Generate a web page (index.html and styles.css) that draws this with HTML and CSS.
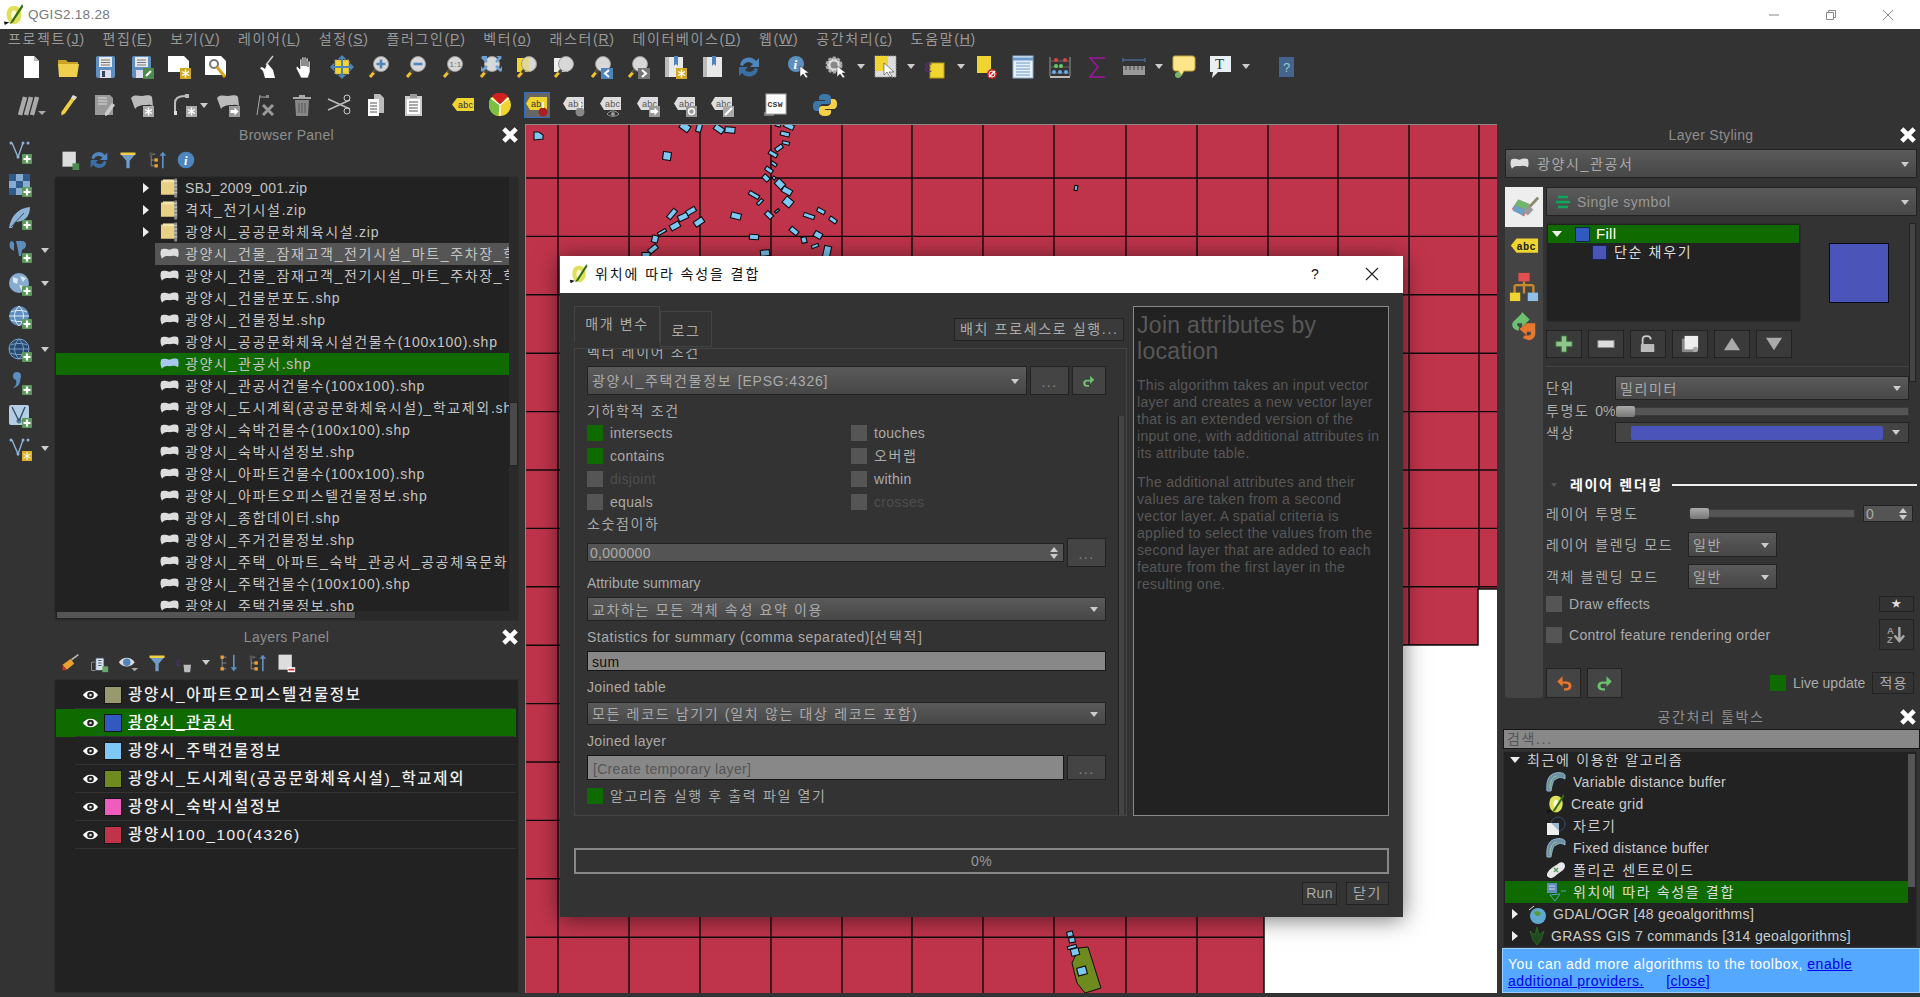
FILE: index.html
```html
<!DOCTYPE html>
<html lang="ko">
<head>
<meta charset="utf-8">
<title>QGIS2.18.28</title>
<link rel="stylesheet" href="styles.css">
</head>
<body>
<svg class="defs" xmlns="http://www.w3.org/2000/svg">
  <symbol id="qgis" viewBox="0 0 24 24"><path d="M12 2c6 0 8 5 8 10s-3 10-8 10-8-5-8-10 2-10 8-10z" fill="#dfe05a"/><path d="M12 7c2 0 3 2 3 5s-1 5-3 5-3-2-3-5 1-5 3-5z" fill="#fbfbd8"/><path d="M21 0 10 17l-3 5 4-2L22 3z" fill="#2f6d12"/><path d="M1 19l6 1-5 3z" fill="#111"/></symbol>
  <symbol id="poly" viewBox="0 0 20 15"><path d="M1 3C3 1 7 2 10 3 13 2 17 1 19 2.500 20 5 20 9 19 11 16 9 13 9 10 10 6 9 4 10 2 12.500 0 9 0 6 1 3Z" fill="currentColor"/></symbol>
  <symbol id="zip" viewBox="0 0 20 22"><path d="M1 3h14l3 3v12H1z" fill="#e8d084"/><path d="M3 2h12v3H3z" fill="#f3e5ad"/><path d="M15 1h3v20h-3z" fill="#8a8a8a"/><path d="M15 4h3M15 8h3M15 12h3M15 16h3" stroke="#ddd"/></symbol>
  <symbol id="eye" viewBox="0 0 18 12"><path d="M1 6c4-6 12-6 16 0-4 6-12 6-16 0z" fill="#fff"/><circle cx="9" cy="6" r="3.500" fill="#222"/><circle cx="9" cy="6" r="1.300" fill="#ddd"/></symbol>
  <symbol id="close" viewBox="0 0 16 16"><path d="M2.500 2.500l11 11M13.500 2.500l-11 11" stroke="#fff" stroke-width="4"/></symbol>
  <symbol id="mag" viewBox="0 0 24 24"><path d="M10 14 3 22" stroke="#f0c030" stroke-width="3"/><path d="M10 14 7 18" stroke="#444" stroke-width="3"/><circle cx="14" cy="9" r="7.500" fill="#d8d8d8" stroke="#9a9a9a"/></symbol>
  <symbol id="plus" viewBox="0 0 24 24"><rect x="14" y="14" width="10" height="10" rx="1" fill="#5c9a5c"/><path d="M19 15.500v7M15.500 19h7" stroke="#fff" stroke-width="2.200"/></symbol>
  <symbol id="vnode" viewBox="0 0 24 24"><path d="M4 3l6 14 5-14" fill="none" stroke="#8fb3d6" stroke-width="1.400"/><circle cx="3" cy="3" r="1.500" fill="#8fb3d6"/><circle cx="15" cy="3" r="1.500" fill="#8fb3d6"/><circle cx="20" cy="3" r="1.500" fill="#8fb3d6"/><circle cx="10" cy="17" r="1.500" fill="#8fb3d6"/></symbol>
  <symbol id="globe" viewBox="0 0 24 24"><circle cx="11" cy="11" r="10" fill="#5d8ec0"/><path d="M3 7c4-2 12-2 16 0M1 11h20M3 15c4 2 12 2 16 0M11 1c-6 6-6 14 0 20M11 1c6 6 6 14 0 20" stroke="#dfe9f3" fill="none"/></symbol>
  <symbol id="abc" viewBox="0 0 24 24"><path d="M5 4h17v13H5l-4-6.500z" fill="#ddd"/><text x="6" y="14" font-size="9" fill="#555" font-family="Liberation Sans">abc</text></symbol>
  <symbol id="blob" viewBox="0 0 24 24"><path d="M1 5c3-4 7-2 11-2s7-2 10 1l1 9c-3-2-6-1-9-1s-7 1-9 4z" fill="#bbb"/></symbol>
  <symbol id="starb" viewBox="0 0 24 24"><rect x="13" y="13" width="11" height="11" fill="#cfa81f"/><path d="M18.500 14.500v8M15 16.500l7 4M22 16.500l-7 4" stroke="#fff" stroke-width="1.400"/></symbol>
  <symbol id="starg" viewBox="0 0 24 24"><rect x="13" y="13" width="11" height="11" fill="#aaa"/><path d="M18.500 14.500v8M15 16.500l7 4M22 16.500l-7 4" stroke="#fff" stroke-width="1.400"/></symbol>
  <symbol id="arrg" viewBox="0 0 24 24"><rect x="13" y="13" width="11" height="11" fill="#999"/><path d="M14.500 17h4v-2.500l4 4-4 4V20h-4z" fill="#fff"/></symbol>
  <symbol id="treeup" viewBox="0 0 24 24"><path d="M5 5h5M5 5v14h5M5 12h5" stroke="#999" fill="none"/><rect x="3" y="3" width="4" height="4" fill="#555"/><rect x="9" y="10" width="4" height="4" fill="#f0a030"/><rect x="9" y="17" width="4" height="4" fill="#f0a030"/><path d="M18 22V7h-3l4-5 4 5h-3v15z" fill="#5f8fc0"/></symbol>
  <symbol id="treedn" viewBox="0 0 24 24"><path d="M5 5h5M5 5v14h5M5 12h5" stroke="#999" fill="none"/><rect x="3" y="3" width="4" height="4" fill="#f0a030"/><rect x="3" y="17" width="4" height="4" fill="#f0a030"/><path d="M18 2v15h-3l4 5 4-5h-3V2z" fill="#5f8fc0"/></symbol>
  <symbol id="funnel" viewBox="0 0 24 24"><path d="M3 3h18v3H3z" fill="#f0d040"/><path d="M4 6h16l-6 7v9h-4v-9z" fill="#6f9dc8"/></symbol>
  <symbol id="undo" viewBox="0 0 24 24"><path d="M10 3 3 10l7 7v-4h5c2 0 3 1 3 3s-1 3-3 3h-3v3h4c4 0 6-3 6-6s-2-6-6-6h-6V3z" fill="#e8772e"/></symbol>
  <symbol id="redo" viewBox="0 0 24 24"><path d="M14 3l7 7-7 7v-4H9c-2 0-3 1-3 3s1 3 3 3h3v3H8c-4 0-6-3-6-6s2-6 6-6h6V3z" fill="#6cc070"/></symbol>
  <symbol id="pencil" viewBox="0 0 24 24"><path d="M17 2l4 2L9 21l-4 2 0-4z" fill="#f0d040" stroke="#222" stroke-width=".6"/><path d="M17 2l4 2-2 3-4-2z" fill="#ddd"/></symbol>
</svg>

<header class="titlebar">
  <svg class="titleicon"><use href="#qgis"/></svg>
  <span class="apptitle">QGIS2.18.28</span>
  <span class="wincontrols">
    <svg class="wc" viewBox="0 0 12 12"><path d="M1 6h10" stroke="#888"/></svg>
    <svg class="wc" viewBox="0 0 12 12"><path d="M1.500 3.500h7v7h-7zM3.500 3.500v-2h7v7h-2" stroke="#888" fill="none"/></svg>
    <svg class="wc" viewBox="0 0 12 12"><path d="M1 1l10 10M11 1 1 11" stroke="#888"/></svg>
  </span>
</header>

<nav class="menubar">
  <span class="k">프로젝트<span class="l">(<u>J</u>)</span></span>
  <span class="k">편집<span class="l">(<u>E</u>)</span></span>
  <span class="k">보기<span class="l">(<u>V</u>)</span></span>
  <span class="k">레이어<span class="l">(<u>L</u>)</span></span>
  <span class="k">설정<span class="l">(<u>S</u>)</span></span>
  <span class="k">플러그인<span class="l">(<u>P</u>)</span></span>
  <span class="k">벡터<span class="l">(<u>o</u>)</span></span>
  <span class="k">래스터<span class="l">(<u>R</u>)</span></span>
  <span class="k">데이터베이스<span class="l">(<u>D</u>)</span></span>
  <span class="k">웹<span class="l">(<u>W</u>)</span></span>
  <span class="k">공간처리<span class="l">(<u>c</u>)</span></span>
  <span class="k">도움말<span class="l">(<u>H</u>)</span></span>
</nav>

<div class="toolrow first">
  <span class="t"><svg class="ic" viewBox="0 0 24 24"><path d="M5 1h10l5 5v17H5z" fill="#fff"/><path d="M15 1v5h5" fill="#bbb"/></svg></span>
  <span class="t"><svg class="ic" viewBox="0 0 24 24"><path d="M2 5h8l2 2h10v3H2z" fill="#c9a227"/><path d="M2 9h21l-2 13H3z" fill="#f0cf4f"/></svg></span>
  <span class="t"><svg class="ic" viewBox="0 0 24 24"><rect x="3" y="1" width="19" height="22" rx="2" fill="#5f8fc0"/><rect x="6" y="2" width="13" height="10" fill="#e8e8e8"/><path d="M8 5h9M8 7.500h9M8 10h9" stroke="#777"/><rect x="7" y="15" width="11" height="8" fill="#dde"/><rect x="9" y="16" width="3" height="6" fill="#345"/></svg></span>
  <span class="t"><svg class="ic" viewBox="0 0 24 24"><rect x="2" y="1" width="19" height="22" rx="2" fill="#5f8fc0"/><rect x="5" y="2" width="13" height="10" fill="#e8e8e8"/><path d="M7 5h9M7 7.500h9M7 10h9" stroke="#777"/><rect x="6" y="15" width="7" height="8" fill="#dde"/><rect x="13" y="13" width="11" height="11" fill="#4d8a4d"/><path d="M16 21l5-5" stroke="#fff" stroke-width="2"/></svg></span>
  <span class="t"><svg class="ic" viewBox="0 0 24 24"><path d="M1 1h16l5 5v11H1z" fill="#fff"/><use href="#starb"/></svg></span>
  <span class="t"><svg class="ic" viewBox="0 0 24 24"><path d="M1 1h16l5 5v14H1z" fill="#fff"/><circle cx="10" cy="9" r="4" fill="none" stroke="#777" stroke-width="2"/><path d="M13 12l8 10" stroke="#d9a520" stroke-width="3"/></svg></span>
  <span class="sep15"></span>
  <span class="t"><svg class="ic" viewBox="0 0 24 24"><path d="M9 23 7 16l-3-3 2-1 3 2 2-5 1 0 5 6 2 8z" fill="#fff"/><path d="M10 10 17 1" stroke="#ccc" stroke-width="1.500"/></svg></span>
  <span class="t"><svg class="ic" viewBox="0 0 24 24"><path d="M8 23 3 13l1-2 3 3V4h2v7-9h2v9-9h2v9V3h2v9-6h2v11l-2 6z" fill="#fff" stroke="#222" stroke-width=".6"/></svg></span>
  <span class="t"><svg class="ic" viewBox="0 0 24 24"><rect x="5" y="5" width="14" height="14" fill="#f0d430" stroke="#999" stroke-dasharray="2 1"/><path d="M12 0l4 4h-8zM12 24l4-4H8zM0 12l4-4v8zM24 12l-4-4v8z" fill="#4d85bf"/><path d="M4 12h16M12 4v16" stroke="#4d85bf" stroke-width="2"/></svg></span>
  <span class="t"><svg class="ic"><use href="#mag"/><path d="M14 4.500v9M9.500 9h9" stroke="#4d85bf" stroke-width="2.600"/></svg></span>
  <span class="t"><svg class="ic"><use href="#mag"/><path d="M9.500 9h9" stroke="#4d85bf" stroke-width="2.600"/></svg></span>
  <span class="t"><svg class="ic"><use href="#mag"/><text x="8.500" y="12" font-size="8" fill="#666" font-family="Liberation Sans">1:1</text></svg></span>
  <span class="t"><svg class="ic"><use href="#mag"/><path d="M3 1h6v4l-3-2zM24 1h-6l3 2zM3 17v-6l2 3zM24 17v-6l-2 3z" fill="#6ea2d6"/><path d="M4 2l5 5M23 2l-5 5M4 16l5-5M23 16l-5-5" stroke="#6ea2d6" stroke-width="2.500"/></svg></span>
  <span class="t"><svg class="ic" viewBox="0 0 24 24"><rect x="2" y="3" width="14" height="14" fill="#f0d430"/><use href="#mag"/><path d="M14 2a7 7 0 0 0 0 14z" fill="#f0d430" opacity=".4"/></svg></span>
  <span class="t"><svg class="ic" viewBox="0 0 24 24"><rect x="2" y="3" width="14" height="14" fill="#eee"/><use href="#mag"/></svg></span>
  <span class="t"><svg class="ic" viewBox="0 0 24 24"><use href="#mag"/><rect x="12" y="13" width="12" height="11" fill="#4d85bf"/><path d="M20 15l-4 3.500 4 3.500" stroke="#fff" stroke-width="2" fill="none"/></svg></span>
  <span class="t"><svg class="ic" viewBox="0 0 24 24"><use href="#mag"/><rect x="12" y="13" width="12" height="11" fill="#777"/><path d="M16 15l4 3.500-4 3.500" stroke="#fff" stroke-width="2" fill="none"/></svg></span>
  <span class="t"><svg class="ic" viewBox="0 0 24 24"><path d="M2 2h18v20H2z" fill="#e8e8e8"/><path d="M2 2h4v20H2z" fill="#bbb"/><path d="M11 1h4v10l-2-2-2 2z" fill="#4d85bf"/><use href="#starb"/></svg></span>
  <span class="t"><svg class="ic" viewBox="0 0 24 24"><path d="M3 2h19v20H3z" fill="#e8e8e8"/><path d="M3 2h4v20H3z" fill="#bbb"/><path d="M12 1h4v10l-2-2-2 2z" fill="#4d85bf"/></svg></span>
  <span class="t"><svg class="ic" viewBox="0 0 24 24"><path d="M3 10a9 9 0 0 1 16-4l3-3v9h-9l3-3A6 6 0 0 0 6 11z" fill="#4d85bf"/><path d="M21 14a9 9 0 0 1-16 4l-3 3v-9h9l-3 3a6 6 0 0 0 10-2z" fill="#3a6fa6"/></svg></span>
  <span class="sep13"></span>
  <span class="t"><svg class="ic" viewBox="0 0 24 24"><circle cx="9" cy="9" r="8" fill="#5f8fc0"/><text x="6.500" y="14" font-size="13" font-style="italic" font-weight="700" fill="#fff" font-family="Liberation Serif">i</text><path d="M13 11v11l3-3 3 4 2-1-3-4h4z" fill="#fff" stroke="#222" stroke-width=".5"/></svg></span>
  <span class="t"><svg class="ic" viewBox="0 0 24 24"><circle cx="10" cy="10" r="7" fill="#ddd" stroke="#aaa" stroke-width="3" stroke-dasharray="3 1.500"/><circle cx="10" cy="10" r="3.500" fill="#888"/><path d="M13 11v11l3-3 3 4 2-1-3-4h4z" fill="#fff" stroke="#222" stroke-width=".5"/></svg></span><span class="dd"></span>
  <span class="t"><svg class="ic" viewBox="0 0 24 24"><rect x="1" y="1" width="21" height="21" fill="#ddd" stroke="#999" stroke-dasharray="1.500 1"/><rect x="1" y="1" width="13" height="15" fill="#f0d430"/><path d="M10 8v12l3-3 3 5 2-1-3-4h5z" fill="#fff" stroke="#222" stroke-width=".5"/></svg></span><span class="dd"></span>
  <span class="t"><svg class="ic" viewBox="0 0 24 24"><rect x="6" y="8" width="14" height="15" fill="#f0d430" stroke="#b99a15"/><text x="0" y="17" font-size="19" fill="#5a2f7a" font-family="Liberation Serif">ε</text></svg></span><span class="dd"></span>
  <span class="t"><svg class="ic" viewBox="0 0 24 24"><rect x="3" y="1" width="14" height="17" fill="#f0d430"/><circle cx="18" cy="19" r="5" fill="#c22"/><path d="M15 22l6-6" stroke="#fff" stroke-width="1.600"/><circle cx="18" cy="19" r="3" fill="none" stroke="#fff"/></svg></span>
  <span class="t"><svg class="ic" viewBox="0 0 24 24"><rect x="2" y="1" width="20" height="22" fill="#e9f0f7" stroke="#8db1d6"/><path d="M2 4h20" stroke="#6a9bcc" stroke-width="3"/><path d="M5 8h14M5 11h14M5 14h14M5 17h14M5 20h14" stroke="#6a9bcc"/></svg></span>
  <span class="t"><svg class="ic" viewBox="0 0 24 24"><path d="M2 2v19M22 2v19" stroke="#999"/><path d="M2 22h20" stroke="#bbb" stroke-width="2"/><path d="M2 6h20M2 12h20M2 18h20" stroke="#666"/><circle cx="8" cy="5" r="2" fill="#d44"/><circle cx="17" cy="5" r="2" fill="#d44"/><circle cx="8" cy="11" r="2" fill="#6c6"/><circle cx="13" cy="11" r="2" fill="#6c6"/><circle cx="6" cy="17" r="2" fill="#6ae"/><circle cx="12" cy="17" r="2" fill="#6ae"/><circle cx="18" cy="17" r="2" fill="#6ae"/></svg></span>
  <span class="t"><svg class="ic" viewBox="0 0 24 24"><path d="M20 3H5l8 9-8 10h15" fill="none" stroke="#a313a3" stroke-width="1.500"/></svg></span>
  <span class="t"><svg class="ic" viewBox="0 0 24 24"><path d="M1 5h22M1 3v4M23 3v4" stroke="#45688c" stroke-width="1.500"/><rect x="1" y="11" width="22" height="9" fill="#999"/><path d="M4 11v4M8 11v4M12 11v4M16 11v4M20 11v4" stroke="#444"/></svg></span><span class="dd"></span>
  <span class="t"><svg class="ic" viewBox="0 0 24 24"><path d="M1 3c0-2 1-2 3-2h16c2 0 3 1 3 3v9c0 2-1 3-3 3H12l-3 5H6l1-5H4c-2 0-3-1-3-3z" fill="#fde68a" stroke="#c7a93a"/><circle cx="6" cy="20" r="3" fill="#7bb36e"/></svg></span>
  <span class="t"><svg class="ic" viewBox="0 0 24 24"><path d="M1 1h21v16H9l-6 6 1-6H1z" fill="#e9f0f4"/><text x="6" y="14" font-size="15" fill="#333" font-family="Liberation Serif">T</text></svg></span><span class="dd"></span>
  <span class="sep15"></span>
  <span class="t"><svg class="ic" viewBox="0 0 24 24"><rect x="5" y="2" width="15" height="20" fill="#44648c"/><text x="9" y="17" font-size="13" fill="#9cc" font-family="Liberation Sans">?</text></svg></span>
</div>

<div class="toolrow second">
  <span class="t"><svg class="ic wide" viewBox="0 0 30 24"><path d="M4 22 9 4M10 22 15 4M16 22 21 4" stroke="#aaa" stroke-width="4.500"/><path d="M22 18h8l-4 4z" fill="#aaa"/></svg></span>
  <span class="t"><svg class="ic"><use href="#pencil"/></svg></span>
  <span class="t"><svg class="ic" viewBox="0 0 24 24"><path d="M2 2h15l3 3v17H2z" fill="#999"/><path d="M5 5h9M5 8h9M5 11h9" stroke="#ddd"/><path d="M19 10l3 2-7 10-3 1 0-3z" fill="#ccc"/></svg></span>
  <span class="t"><svg class="ic" viewBox="0 0 24 24"><use href="#blob"/><use href="#starg"/></svg></span>
  <span class="sep6"></span>
  <span class="t"><svg class="ic" viewBox="0 0 24 24"><path d="M2 22V10C2 5 6 3 12 3" fill="none" stroke="#bbb" stroke-width="2"/><rect x="1" y="18" width="3" height="4" fill="#ddd"/><rect x="12" y="1" width="4" height="4" fill="#bbb"/><use href="#starg"/></svg></span><span class="dd tight"></span>
  <span class="t"><svg class="ic" viewBox="0 0 24 24"><use href="#blob"/><use href="#arrg"/></svg></span>
  <span class="t"><svg class="ic" viewBox="0 0 24 24"><path d="M4 22 7 2M7 4h8" stroke="#aaa" fill="none"/><rect x="13" y="2" width="3" height="3" fill="#888"/><path d="M10 12l10 10M20 12 10 22" stroke="#999" stroke-width="3"/></svg></span>
  <span class="t"><svg class="ic" viewBox="0 0 24 24"><path d="M5 7h14l-1 16H6z" fill="#888"/><path d="M3 4h18v2H3zM9 2h6v2H9z" fill="#aaa"/><path d="M9 10v10M12 10v10M15 10v10" stroke="#555"/></svg></span>
  <span class="t"><svg class="ic" viewBox="0 0 24 24"><path d="M1 6 23 16M1 17 23 7" stroke="#bbb" stroke-width="1.600"/><circle cx="20" cy="18" r="3" fill="none" stroke="#ccc"/><circle cx="20" cy="5" r="3" fill="none" stroke="#ccc"/></svg></span>
  <span class="t"><svg class="ic" viewBox="0 0 24 24"><path d="M10 1h6l4 4v15H10z" fill="#bbb"/><path d="M4 6h11v17H4z" fill="#fff"/><path d="M6 10h7M6 13h7M6 16h7M6 19h7" stroke="#555"/></svg></span>
  <span class="t"><svg class="ic" viewBox="0 0 24 24"><rect x="4" y="3" width="17" height="20" fill="#ccc"/><rect x="6" y="6" width="13" height="15" fill="#fff"/><rect x="9" y="1" width="7" height="4" fill="#999"/><path d="M8 9h9M8 12h9M8 15h9M8 18h9" stroke="#555"/></svg></span>
  <span class="sep13"></span>
  <span class="t"><svg class="ic" viewBox="0 0 24 24"><path d="M6 5h17v13H6L1 11.500z" fill="#f0d430"/><text x="7" y="15" font-size="9" fill="#333" font-family="Liberation Sans">abc</text></svg></span>
  <span class="t"><svg class="ic" viewBox="0 0 24 24"><circle cx="12" cy="12" r="11" fill="#f0d430"/><path d="M12 12 3 5v-1a11 11 0 0 0-2 8c0 6 4 10 9 11z" fill="#7bc043"/><path d="M12 12 4 3a11 11 0 0 1 16 0z" fill="#d02020"/><path d="M12 12v11M12 12 3 5M12 12l9-7" stroke="#fff" stroke-width="1.200"/></svg></span>
  <span class="t hl"><svg class="ic" viewBox="0 0 24 24"><path d="M5 4h17v13H5l-4-6.500z" fill="#f0d430"/><text x="6" y="14" font-size="9" fill="#333" font-family="Liberation Sans">ab</text><circle cx="18" cy="19" r="4.500" fill="#a82020"/><path d="M18 9v6" stroke="#eee" stroke-width="2"/></svg></span>
  <span class="t"><svg class="ic" viewBox="0 0 24 24"><use href="#abc"/><circle cx="18" cy="19" r="4.500" fill="#888"/><path d="M18 9v6" stroke="#eee" stroke-width="2"/></svg></span>
  <span class="t"><svg class="ic" viewBox="0 0 24 24"><use href="#abc"/><path d="M8 21c3-4 9-4 12 0-3 3-9 3-12 0z" fill="none" stroke="#999"/><circle cx="14" cy="21" r="2" fill="#999"/></svg></span>
  <span class="t"><svg class="ic" viewBox="0 0 24 24"><use href="#abc"/><use href="#arrg"/></svg></span>
  <span class="t"><svg class="ic" viewBox="0 0 24 24"><use href="#abc"/><rect x="13" y="13" width="11" height="11" fill="#999"/><circle cx="18.500" cy="18.500" r="3" fill="none" stroke="#fff" stroke-width="1.500"/></svg></span>
  <span class="t"><svg class="ic" viewBox="0 0 24 24"><use href="#abc"/><rect x="13" y="13" width="11" height="11" fill="#aaa"/><path d="M15 22l7-7" stroke="#fff" stroke-width="2"/></svg></span>
  <span class="sep16"></span>
  <span class="t"><svg class="ic" viewBox="0 0 24 24"><rect x="1" y="19" width="10" height="4" fill="#777"/><rect x="3" y="1" width="20" height="20" fill="#fff" stroke="#aaa"/><text x="4.500" y="14" font-size="8" font-weight="700" fill="#333" font-family="Liberation Mono">CSW</text></svg></span>
  <span class="sep13"></span>
  <span class="t"><svg class="ic" viewBox="0 0 24 24"><path d="M12 1c-5 0-6 2-6 4v2h6v1H4c-3 0-4 2-4 5s1 5 4 5h2v-3c0-2 2-4 4-4h5c2 0 3-1 3-3V5c0-2-2-4-6-4z" fill="#3b77a8"/><path d="M12 23c5 0 6-2 6-4v-2h-6v-1h8c3 0 4-2 4-5s-1-5-4-5h-2v3c0 2-2 4-4 4H9c-2 0-3 1-3 3v3c0 2 2 4 6 4z" fill="#f5d04a"/></svg></span>
</div>

<main class="workspace">
  <aside class="sidebar">
    <span class="sb"><svg class="ic"><use href="#vnode"/><use href="#plus"/></svg></span>
    <span class="sb"><svg class="ic" viewBox="0 0 24 24"><path d="M1 1h7v7H1zM15 1h7v7h-7zM8 8h7v7H8zM1 15h7v7H1zM15 15h7v7h-7z" fill="#2f5c8c"/><path d="M8 1h7v7H8zM1 8h7v7H1zM15 8h7v7h-7zM8 15h7v7H8z" fill="#88abd0"/><use href="#plus"/></svg></span>
    <span class="sb"><svg class="ic" viewBox="0 0 24 24"><path d="M1 22C3 10 10 2 22 1c0 10-6 15-15 15l-3 6z" fill="#8fb3d6"/><path d="M3 21 16 7" stroke="#34506c"/><use href="#plus"/></svg></span>
    <span class="sb"><svg class="ic" viewBox="0 0 24 24"><path d="M4 2c-3 0-3 6-1 8l3 2V4zM8 2h6c4 0 5 4 3 7l-3 2-1 6h-2l-1-6z" fill="#5d8ec0"/><use href="#plus"/></svg><span class="dd side"></span></span>
    <span class="sb"><svg class="ic" viewBox="0 0 24 24"><circle cx="11" cy="11" r="10" fill="#88abd0"/><path d="M5 5l5 2-1 5-4-2zM12 4l6 2-3 4zM11 13l5 1-2 5z" fill="#dfe9f3"/><use href="#plus"/></svg><span class="dd side"></span></span>
    <span class="sb"><svg class="ic"><use href="#globe"/><use href="#plus"/></svg></span>
    <span class="sb"><svg class="ic" viewBox="0 0 24 24"><circle cx="11" cy="11" r="10" fill="#27496f" stroke="#7aa3cc"/><path d="M3 7c4-2 12-2 16 0M1 11h20M3 15c4 2 12 2 16 0M11 1c-6 6-6 14 0 20M11 1c6 6 6 14 0 20" stroke="#7aa3cc" fill="none"/><use href="#plus"/></svg><span class="dd side"></span></span>
    <span class="sb"><svg class="ic" viewBox="0 0 24 24"><circle cx="9" cy="5" r="4" fill="#5d8ec0"/><path d="M12 6c1 5-1 10-7 11 3-2 4-5 3-8z" fill="#5d8ec0"/><use href="#plus"/></svg></span>
    <span class="sb"><svg class="ic" viewBox="0 0 24 24"><rect x="1" y="1" width="20" height="20" rx="2" fill="#b5cee6"/><path d="M4 3l7 14 6-14" fill="none" stroke="#34506c" stroke-width="1.400"/><circle cx="11" cy="17" r="2" fill="none" stroke="#34506c"/><use href="#plus"/></svg></span>
    <span class="sb"><svg class="ic"><use href="#vnode"/><rect x="14" y="14" width="10" height="10" fill="#e0b020"/><path d="M19 15v8M15.500 17l7 4M22.500 17l-7 4" stroke="#fff"/></svg><span class="dd side"></span></span>
  </aside>

  <section class="leftpanels">
    <div class="ptitle browser-title"><span></span><span>Browser Panel</span><svg class="x"><use href="#close"/></svg></div>
    <div class="ptools browser-tools">
      <span class="pt"><svg class="ic small" viewBox="0 0 24 24"><rect x="3" y="2" width="16" height="18" fill="#ddd"/><rect x="15" y="16" width="8" height="8" fill="#4d8a4d"/></svg></span>
      <span class="pt"><svg class="ic small" viewBox="0 0 24 24"><path d="M3 10a9 9 0 0 1 16-4l3-3v9h-9l3-3A6 6 0 0 0 6 11z" fill="#4d85bf"/><path d="M21 14a9 9 0 0 1-16 4l-3 3v-9h9l-3 3a6 6 0 0 0 10-2z" fill="#3a6fa6"/></svg></span>
      <span class="pt"><svg class="ic small"><use href="#funnel"/></svg></span>
      <span class="pt"><svg class="ic small"><use href="#treeup"/></svg></span>
      <span class="pt"><svg class="ic small" viewBox="0 0 24 24"><circle cx="12" cy="12" r="10" fill="#4d85bf"/><text x="9.500" y="18" font-size="15" font-style="italic" font-weight="700" fill="#fff" font-family="Liberation Serif">i</text></svg></span>
    </div>
    <div class="tree browsertree">
      <div class="treeview">
        <div class="frow"><span class="arr"></span><svg class="fi zip"><use href="#zip"/></svg><span class="fn">SBJ_2009_001.zip</span></div>
        <div class="frow"><span class="arr"></span><svg class="fi zip"><use href="#zip"/></svg><span class="fn k">격자_전기시설<span class="l">.zip</span></span></div>
        <div class="frow"><span class="arr"></span><svg class="fi zip"><use href="#zip"/></svg><span class="fn k">광양시_공공문화체육시설<span class="l">.zip</span></span></div>
        <div class="frow"><div class="fgray"><svg class="fi"><use href="#poly"/></svg><span class="fn k">광양시_건물_잠재고객_전기시설_마트_주차장_학교</span></div></div>
        <div class="frow"><svg class="fi"><use href="#poly"/></svg><span class="fn k">광양시_건물_잠재고객_전기시설_마트_주차장_학교</span></div>
        <div class="frow"><svg class="fi"><use href="#poly"/></svg><span class="fn k">광양시_건물분포도<span class="l">.shp</span></span></div>
        <div class="frow"><svg class="fi"><use href="#poly"/></svg><span class="fn k">광양시_건물정보<span class="l">.shp</span></span></div>
        <div class="frow"><svg class="fi"><use href="#poly"/></svg><span class="fn k">광양시_공공문화체육시설건물수<span class="l">(100x100).shp</span></span></div>
        <div class="frow fsel"><svg class="fi blue"><use href="#poly"/></svg><span class="fn k">광양시_관공서<span class="l">.shp</span></span></div>
        <div class="frow"><svg class="fi"><use href="#poly"/></svg><span class="fn k">광양시_관공서건물수<span class="l">(100x100).shp</span></span></div>
        <div class="frow"><svg class="fi"><use href="#poly"/></svg><span class="fn k">광양시_도시계획<span class="l">(</span>공공문화체육시설<span class="l">)</span>_학교제외<span class="l">.shp</span></span></div>
        <div class="frow"><svg class="fi"><use href="#poly"/></svg><span class="fn k">광양시_숙박건물수<span class="l">(100x100).shp</span></span></div>
        <div class="frow"><svg class="fi"><use href="#poly"/></svg><span class="fn k">광양시_숙박시설정보<span class="l">.shp</span></span></div>
        <div class="frow"><svg class="fi"><use href="#poly"/></svg><span class="fn k">광양시_아파트건물수<span class="l">(100x100).shp</span></span></div>
        <div class="frow"><svg class="fi"><use href="#poly"/></svg><span class="fn k">광양시_아파트오피스텔건물정보<span class="l">.shp</span></span></div>
        <div class="frow"><svg class="fi"><use href="#poly"/></svg><span class="fn k">광양시_종합데이터<span class="l">.shp</span></span></div>
        <div class="frow"><svg class="fi"><use href="#poly"/></svg><span class="fn k">광양시_주거건물정보<span class="l">.shp</span></span></div>
        <div class="frow"><svg class="fi"><use href="#poly"/></svg><span class="fn k">광양시_주택_아파트_숙박_관공서_공공체육문화</span></div>
        <div class="frow"><svg class="fi"><use href="#poly"/></svg><span class="fn k">광양시_주택건물수<span class="l">(100x100).shp</span></span></div>
        <div class="frow"><svg class="fi"><use href="#poly"/></svg><span class="fn k">광양시_주택건물정보<span class="l">.shp</span></span></div>
      </div>
      <div class="vscroll"><span class="vthumb"></span></div>
      <div class="hscroll"><span class="hthumb"></span></div>
      <div class="corner"></div>
    </div>

    <div class="ptitle layers-title"><span></span><span>Layers Panel</span><svg class="x"><use href="#close"/></svg></div>
    <div class="ptools layers-tools">
      <span class="pt"><svg class="ic small" viewBox="0 0 24 24"><path d="M3 14 13 7l4 6-9 7z" fill="#e8a030"/><path d="M3 14l5 6-5 1z" fill="#c33"/><path d="M14 8 22 2" stroke="#bbb" stroke-width="2"/></svg></span>
      <span class="pt"><svg class="ic small" viewBox="0 0 24 24"><path d="M3 11h5v10H3z" fill="none" stroke="#999"/><path d="M8 6h10v15H8z" fill="#d8e3ee" stroke="#345"/><path d="M11 9h4M11 12h4M11 15h4" stroke="#345"/><rect x="16" y="16" width="7" height="7" fill="#6aa86a"/></svg></span>
      <span class="pt"><svg class="ic small" viewBox="0 0 24 24"><path d="M1 11c5-7 14-7 19 0-5 7-14 7-19 0z" fill="#ddd"/><circle cx="10.500" cy="11" r="4.500" fill="#4d85bf"/><path d="M16 18h8l-4 4z" fill="#aaa"/></svg></span>
      <span class="pt"><svg class="ic small"><use href="#funnel"/></svg></span>
      <span class="pt wdd"><svg class="ic small" viewBox="0 0 24 24"><text x="0" y="15" font-size="15" fill="#5a2f7a" font-family="Liberation Serif">ε</text><path d="M9 14h9l-1 9H10z" fill="#bbb"/></svg><span class="dd"></span></span>
      <span class="pt"><svg class="ic small"><use href="#treedn"/></svg></span>
      <span class="pt"><svg class="ic small"><use href="#treeup"/></svg></span>
      <span class="pt"><svg class="ic small" viewBox="0 0 24 24"><rect x="3" y="2" width="16" height="18" fill="#ddd"/><rect x="14" y="17" width="9" height="6" fill="#fff"/><path d="M15 20h7" stroke="#d22" stroke-width="2"/></svg></span>
    </div>
    <div class="tree layertree">
      <div class="lrow"><svg class="eye"><use href="#eye"/></svg><span class="sw sw-khaki"></span><span class="ln k">광양시_아파트오피스텔건물정보</span></div>
      <div class="lrow lsel"><svg class="eye"><use href="#eye"/></svg><span class="sw sw-blue"></span><span class="ln k"><u>광양시_관공서</u></span></div>
      <div class="lrow"><svg class="eye"><use href="#eye"/></svg><span class="sw sw-sky"></span><span class="ln k">광양시_주택건물정보</span></div>
      <div class="lrow"><svg class="eye"><use href="#eye"/></svg><span class="sw sw-olive"></span><span class="ln k">광양시_도시계획<span class="l">(</span>공공문화체육시설<span class="l">)</span>_학교제외</span></div>
      <div class="lrow"><svg class="eye"><use href="#eye"/></svg><span class="sw sw-pink"></span><span class="ln k">광양시_숙박시설정보</span></div>
      <div class="lrow"><svg class="eye"><use href="#eye"/></svg><span class="sw sw-red"></span><span class="ln k">광양시<span class="l">100_100(4326)</span></span></div>
    </div>
  </section>

  <section class="canvas">
    <svg class="map" viewBox="525 124 972 869" xmlns="http://www.w3.org/2000/svg">
      <defs><clipPath id="land"><path d="M525 124H1497V589H1478V645H1264V993H525Z"/></clipPath></defs>
      <path d="M525 124H1497V589H1478V645H1264V993H525Z" fill="#bf344b"/>
      <g clip-path="url(#land)" stroke="#0c0c0c" stroke-width="1.400">
        <path d="M558 124V993M629 124V993M700 124V993M771 124V993M842 124V993M912 124V993M983 124V993M1054 124V993M1126 124V993M1197 124V993M1268 124V993M1338 124V993M1409 124V993M1479 124V993"/>
        <path d="M525 178H1497M525 236.400H1497M525 294.800H1497M525 353.200H1497M525 411.600H1497M525 470H1497M525 528.400H1497M525 586.800H1497M525 645.200H1497M525 703.600H1497M525 762H1497M525 820.400H1497M525 878.800H1497M525 937.200H1497"/>
      </g>
      <path d="M1497 589H1478V645H1264V993" fill="none" stroke="#0c0c0c" stroke-width="1.500"/>
      <path d="M1079 948 1088 947 1101 988 1085 993 1077 983 1072 963Z" fill="#6f8a1f" stroke="#0c0c0c"/>
      <g fill="#7ec8f6" stroke="#0c0c0c" stroke-width="1.100">
        <path d="M534 132h5l4 3 0 4-9 1z"/>
        <rect x="-5" y="-3.500" width="10" height="7" transform="translate(685 127) rotate(35)"/>
        <rect x="-2.500" y="-4" width="5" height="8" transform="translate(699 128) rotate(15)"/>
        <rect x="-5" y="-3" width="10" height="6" transform="translate(719 129) rotate(35)"/>
        <rect x="-5" y="-3" width="10" height="6" transform="translate(730 130) rotate(5)"/>
        <rect x="-4" y="-4" width="8" height="8" transform="translate(667 156) rotate(8)"/>
        <rect x="-5" y="-2.500" width="10" height="5" transform="translate(789 126) rotate(25)"/>
        <rect x="-2.500" y="-1.500" width="5" height="3" transform="translate(778 125) rotate(20)"/>
        <rect x="-4.500" y="-2" width="9" height="4" transform="translate(785 134) rotate(15)"/>
        <rect x="-3.500" y="-1.500" width="7" height="3" transform="translate(786 143) rotate(15)"/>
        <rect x="-4" y="-2" width="8" height="4" transform="translate(779 148) rotate(-35)"/>
        <rect x="-4.500" y="-2" width="9" height="4" transform="translate(773 154) rotate(30)"/>
        <rect x="-3" y="-1.500" width="6" height="3" transform="translate(774 164) rotate(35)"/>
        <rect x="-4" y="-2" width="8" height="4" transform="translate(769 170) rotate(35)"/>
        <rect x="-3.500" y="-2.500" width="7" height="5" transform="translate(766 178) rotate(45)"/>
        <rect x="-1.500" y="-1.500" width="3" height="3" transform="translate(774 178) rotate(30)"/>
        <rect x="-4.500" y="-3.500" width="9" height="7" transform="translate(780 184) rotate(45)"/>
        <rect x="-5" y="-3" width="10" height="6" transform="translate(787 191) rotate(30)"/>
        <rect x="-4.500" y="-4" width="9" height="8" transform="translate(788 202) rotate(40)"/>
        <rect x="-5.500" y="-2" width="11" height="4" transform="translate(754 195) rotate(30)"/>
        <rect x="-3.500" y="-1.500" width="7" height="3" transform="translate(760 202) rotate(-45)"/>
        <rect x="-4" y="-2.500" width="8" height="5" transform="translate(769 215) rotate(45)"/>
        <rect x="-2.500" y="-1" width="5" height="2" transform="translate(777 211) rotate(-40)"/>
        <rect x="-5" y="-3" width="10" height="6" transform="translate(736 216) rotate(15)"/>
        <rect x="-5.500" y="-2" width="11" height="4" transform="translate(809 216) rotate(18)"/>
        <rect x="-4" y="-2" width="8" height="4" transform="translate(821 211) rotate(28)"/>
        <rect x="-4" y="-2" width="8" height="4" transform="translate(833 220) rotate(35)"/>
        <rect x="-4.500" y="-2.500" width="9" height="5" transform="translate(794 231) rotate(40)"/>
        <rect x="-2.500" y="-3" width="5" height="6" transform="translate(804 240) rotate(-15)"/>
        <rect x="-4" y="-3" width="8" height="6" transform="translate(818 235) rotate(30)"/>
        <rect x="-3.500" y="-1.500" width="7" height="3" transform="translate(815 246) rotate(-20)"/>
        <rect x="-3.500" y="-6" width="7" height="12" transform="translate(827 252) rotate(12)"/>
        <rect x="-4.500" y="-3" width="9" height="6" transform="translate(765 253) rotate(-5)"/>
        <rect x="-4.500" y="-2.500" width="9" height="5" transform="translate(754 237) rotate(3)"/>
        <rect x="-5" y="-3" width="10" height="6" transform="translate(699 222) rotate(-35)"/>
        <rect x="-5" y="-2.500" width="10" height="5" transform="translate(691 211) rotate(-30)"/>
        <rect x="-5" y="-3" width="10" height="6" transform="translate(683 217) rotate(-25)"/>
        <rect x="-5.500" y="-2.500" width="11" height="5" transform="translate(672 214) rotate(-50)"/>
        <rect x="-5" y="-3" width="10" height="6" transform="translate(675 226) rotate(-30)"/>
        <rect x="-4.500" y="-1.500" width="9" height="3" transform="translate(662 232) rotate(-30)"/>
        <rect x="-3" y="-3.500" width="6" height="7" transform="translate(655 239) rotate(15)"/>
        <rect x="-5" y="-2.500" width="10" height="5" transform="translate(653 249) rotate(-40)"/>
        <rect x="-4" y="-2.500" width="8" height="5" transform="translate(646 255)"/>
        <rect x="-1.500" y="-2.500" width="3" height="5" transform="translate(1076 188) rotate(10)"/>
        <rect x="-3" y="-2.500" width="6" height="5" transform="translate(1070 934) rotate(-15)"/>
        <rect x="-3" y="-2.500" width="6" height="5" transform="translate(1072 940) rotate(-10)"/>
        <rect x="-4.500" y="-1.500" width="9" height="3" transform="translate(1072 947) rotate(-15)"/>
        <rect x="-4" y="-3.500" width="8" height="7" transform="translate(1075 952) rotate(-15)"/>
        <rect x="-4.500" y="-4" width="9" height="8" transform="translate(1082 971) rotate(-15)"/>
      </g>
    </svg>

    <div class="dialog">
      <div class="dtitle">
        <svg class="dicon"><use href="#qgis"/></svg>
        <span class="dname k">위치에 따라 속성을 결합</span>
        <span class="dhelp">?</span>
        <svg class="dclose" viewBox="0 0 14 14"><path d="M1 1l12 12M13 1 1 13" stroke="#222" stroke-width="1.100"/></svg>
      </div>
      <div class="dbody">
        <div class="dcols">
          <div class="dleft">
            <div class="tabs">
              <span class="tab on k">매개 변수</span>
              <span class="tab off k">로그</span>
              <span class="batch k">배치 프로세스로 실행...</span>
            </div>
            <div class="pane">
              <div class="form">
                <div class="lab clipped k">벡터 레이어 조건</div>
                <div class="line r5">
                  <div class="combo grow h29 k"><span>광양시_주택건물정보 <span class="l">[EPSG:4326]</span></span><span class="dd"></span></div>
                  <span class="dots w39">...</span>
                  <span class="dots w34"><svg class="refresh" viewBox="0 0 24 24"><use href="#redo"/></svg></span>
                </div>
                <div class="lab r7 k">기하학적 조건</div>
                <div class="checks">
                  <label class="chk"><span class="box on"></span>intersects</label>
                  <label class="chk"><span class="box"></span>touches</label>
                  <label class="chk"><span class="box on"></span>contains</label>
                  <label class="chk"><span class="box"></span><span class="k">오버랩</span></label>
                  <label class="chk dim"><span class="box"></span>disjoint</label>
                  <label class="chk"><span class="box"></span>within</label>
                  <label class="chk"><span class="box"></span>equals</label>
                  <label class="chk dim"><span class="box"></span>crosses</label>
                </div>
                <div class="lab r2 k">소숫점이하</div>
                <div class="line r5">
                  <div class="spin grow"><span>0,000000</span><span class="updown"><i class="up"></i><i class="down"></i></span></div>
                  <span class="dots w39">...</span>
                </div>
                <div class="lab r7 attr">Attribute summary</div>
                <div class="combo h24 r5 k"><span>교차하는 모든 객체 속성 요약 이용</span><span class="dd"></span></div>
                <div class="lab r7 stat">Statistics for summary (comma separated)[<span class="k">선택적</span>]</div>
                <div class="input r5 h20">sum</div>
                <div class="lab r7">Joined table</div>
                <div class="combo h23 r6 k"><span>모든 레코드 남기기 <span class="l">(</span>일치 않는 대상 레코드 포함<span class="l">)</span></span><span class="dd"></span></div>
                <div class="lab r7">Joined layer</div>
                <div class="line r5">
                  <div class="input grow h25 ph">[Create temporary layer]</div>
                  <span class="dots w39 short">...</span>
                </div>
                <label class="chk r8 single"><span class="box on"></span><span class="k">알고리즘 실행 후 출력 파일 열기</span></label>
              </div>
              <div class="formscroll"></div>
            </div>
          </div>
          <article class="help">
            <h1>Join attributes by<br>location</h1>
            <p>This algorithm takes an input vector<br>layer and creates a new vector layer<br>that is an extended version of the<br>input one, with additional attributes in<br>its attribute table.</p>
            <p>The additional attributes and their<br>values are taken from a second<br>vector layer. A spatial criteria is<br>applied to select the values from the<br>second layer that are added to each<br>feature from the first layer in the<br>resulting one.</p>
          </article>
        </div>
        <div class="progress">0%</div>
        <div class="dbuttons"><span class="btn run">Run</span><span class="btn closeb k">닫기</span></div>
      </div>
    </div>
  </section>

  <section class="rightpanels">
    <div class="ptitle rtitle"><span></span><span>Layer Styling</span><svg class="x"><use href="#close"/></svg></div>
    <div class="combo layercombo h29 k"><span class="comboitem"><svg class="fi nomargin"><use href="#poly"/></svg>광양시_관공서</span><span class="dd"></span></div>
    <div class="stylebody">
      <div class="styletabs">
        <span class="stab active"><svg class="stic" viewBox="0 0 32 32"><path d="M3 18 10 8l12 5-6 13z" fill="#d46060"/><path d="M10 8l12 5-4 6-12-5z" fill="#6fb66f"/><path d="M6 14l12 5-3 6-11-5z" fill="#6ba0cc"/><path d="M20 18 31 6" stroke="#8a8a6a" stroke-width="3"/><path d="M15 20l6-6 5 5-6 6z" fill="#999"/></svg></span>
        <span class="stab"><svg class="stic" viewBox="0 0 32 32"><path d="M8 7h23v15H8l-6-7.500z" fill="#f0d430"/><text x="8" y="19" font-size="11" font-weight="700" fill="#222" font-family="Liberation Mono">abc</text></svg></span>
        <span class="stab"><svg class="stic" viewBox="0 0 32 32"><rect x="10" y="1" width="12" height="9" fill="#e05050"/><path d="M16 10v6M6 14v9M16 10v13M26 14v9M6 14h20" stroke="#c88a2a" stroke-width="2.500" fill="none"/><rect x="1" y="22" width="11" height="9" fill="#f0d430"/><rect x="20" y="22" width="11" height="9" fill="#8fc0ea"/></svg></span>
        <span class="stab"><svg class="stic" viewBox="0 0 32 32"><path d="M13 2 4 11c-2 5 2 8 6 9l1-4c-2-1-3-3-2-4h5v4l8-8-8-8z" fill="#6cc070"/><path d="M19 12l9 0 0 9c1 5-3 9-7 9l-6-2 1-3h5c2 0 3-2 2-4h-4v4l-8-7z" fill="#e8772e"/></svg></span>
      </div>
      <div class="stylemain">
        <div class="combo h29 k"><span class="comboitem"><svg class="rend" viewBox="0 0 14 14"><path d="M2 2h10M0 7h14M2 12h10" stroke="#0aa85a" stroke-width="2.500"/></svg><span class="dimtext">Single symbol</span></span><span class="dd"></span></div>
        <div class="symarea">
          <div class="symleft">
            <div class="symtop">
              <div class="symtree">
                <div class="symrow on"><span class="arr down"></span><span class="sw2 blue"></span><b>Fill</b></div>
                <div class="symrow sub"><span class="sw2 indigo"></span><span class="k">단순 채우기</span></div>
              </div>
              <div class="preview"></div>
            </div>
            <div class="symbtns">
              <span class="sbtn"><svg class="sic" viewBox="0 0 20 20"><path d="M7 1h6v6h6v6h-6v6H7v-6H1V7h6z" fill="#8fc48f" stroke="#3a703a"/></svg></span>
              <span class="sbtn"><svg class="sic" viewBox="0 0 20 20"><rect x="1" y="6" width="18" height="8" fill="#ddd" stroke="#888"/></svg></span>
              <span class="sbtn"><svg class="sic" viewBox="0 0 20 20"><path d="M4 10V5c0-5 9-5 9 0" fill="none" stroke="#ccc" stroke-width="2"/><rect x="2" y="10" width="15" height="9" rx="1" fill="#bbb"/></svg></span>
              <span class="sbtn"><svg class="sic" viewBox="0 0 20 20"><rect x="1" y="4" width="14" height="15" fill="#888"/><rect x="4" y="1" width="15" height="15" fill="#eee"/><circle cx="16" cy="16" r="3" fill="#aaa"/></svg></span>
              <span class="sbtn"><svg class="sic" viewBox="0 0 20 20"><path d="M10 3 19 17H1z" fill="#aaa"/></svg></span>
              <span class="sbtn"><svg class="sic" viewBox="0 0 20 20"><path d="M10 17 19 3H1z" fill="#aaa"/></svg></span>
            </div>
            <div class="rule"></div>
            <div class="prop unit"><span class="plabel k">단위</span><div class="combo fill h24 k"><span>밀리미터</span><span class="dd"></span></div></div>
            <div class="prop opac"><span class="plabel k">투명도 <span class="l">0%</span></span><div class="slider fill"><span class="knob"></span></div></div>
            <div class="prop color"><span class="plabel k">색상</span><div class="colorbtn fill"><span class="colorbar"></span><span class="dd"></span></div></div>
          </div>
          <div class="symscroll"></div>
        </div>
        <div class="rendhead"><span class="tri"></span><b class="k">레이어 렌더링</b><span class="hr"></span></div>
        <div class="rprop p1"><span class="rlabel k">레이어 투명도</span><div class="slider rs"><span class="knob"></span></div><div class="spin sv"><span>0</span><span class="updown"><i class="up"></i><i class="down"></i></span></div></div>
        <div class="rprop p2"><span class="rlabel k">레이어 블렌딩 모드</span><div class="combo blend k"><span>일반</span><span class="dd"></span></div></div>
        <div class="rprop p3"><span class="rlabel k">객체 블렌딩 모드</span><div class="combo blend k"><span>일반</span><span class="dd"></span></div></div>
        <div class="rprop p4"><span class="box"></span><span class="txt">Draw effects</span><span class="sqbtn star">★</span></div>
        <div class="rprop p5"><span class="box"></span><span class="txt">Control feature rendering order</span><span class="sqbtn az"><svg class="azic" viewBox="0 0 20 20"><text x="0" y="9" font-size="10" font-weight="700" fill="#999" font-family="Liberation Sans">A</text><text x="0" y="19" font-size="10" font-weight="700" fill="#999" font-family="Liberation Sans">Z</text><path d="M13 2v13M8 11l5 6 5-6" stroke="#aaa" stroke-width="2.500" fill="none"/></svg></span></div>
        <div class="rprop p6">
          <span class="ubtn"><svg class="uic"><use href="#undo"/></svg></span>
          <span class="ubtn"><svg class="uic"><use href="#redo"/></svg></span>
          <span class="box on live"></span><span class="livetxt">Live update</span><span class="apply k">적용</span>
        </div>
      </div>
    </div>

    <div class="ptitle ttitle"><span></span><span class="k">공간처리 툴박스</span><svg class="x"><use href="#close"/></svg></div>
    <div class="search k">검색...</div>
    <div class="tbtree">
      <div class="tblist">
        <div class="trow"><span class="arr down"></span><span class="k">최근에 이용한 알고리즘</span></div>
        <div class="trow in"><svg class="ti" viewBox="0 0 20 20"><path d="M1 19C0 8 3 2 10 1c4-1 8 0 9 2v4c-3-2-6-2-9 0-3 1-4 6-5 12z" fill="#6f8fa3" stroke="#8fb6cc"/><path d="M4 17C4 9 6 5 11 4" stroke="#9acb9a" fill="none"/></svg><span>Variable distance buffer</span></div>
        <div class="trow in"><svg class="ti" viewBox="0 0 24 24"><use href="#qgis"/></svg><span class="shift">Create grid</span></div>
        <div class="trow in"><svg class="ti" viewBox="0 0 20 20"><circle cx="12" cy="8" r="7" fill="none" stroke="#34506c"/><rect x="1" y="7" width="12" height="12" fill="#eee"/><path d="M5 7h8v8z" fill="#9ab8d4"/></svg><span class="k">자르기</span></div>
        <div class="trow in"><svg class="ti" viewBox="0 0 20 20"><path d="M1 19C0 8 3 2 10 1c4-1 8 0 9 2v4c-3-2-6-2-9 0-3 1-4 6-5 12z" fill="#6f8fa3" stroke="#8fb6cc"/><path d="M4 17C4 9 6 5 11 4" stroke="#9acb9a" fill="none"/></svg><span>Fixed distance buffer</span></div>
        <div class="trow in"><svg class="ti" viewBox="0 0 20 20"><path d="M2 12c3-5 8-6 11-9 3-2 6 0 6 3s-3 5-6 7-6 6-9 5-4-3-2-6z" fill="#e8e8e8"/><path d="M8 8l4 4M12 8l-4 4" stroke="#5a9a5a" stroke-width="1.500"/></svg><span class="k">폴리곤 센트로이드</span></div>
        <div class="trow in on"><svg class="ti" viewBox="0 0 20 20"><rect x="1" y="1" width="10" height="10" fill="#5f8fb8"/><path d="M3 4h6M3 7h6" stroke="#dce"/><path d="M4 13l5 6 5-7zM15 9h5" stroke="#5aa0c8" fill="none"/></svg><span class="k">위치에 따라 속성을 결합</span></div>
        <div class="trow"><span class="arr"></span><svg class="ti prov" viewBox="0 0 20 20"><circle cx="11" cy="12" r="8" fill="#5fa8d0"/><path d="M7 8c3-2 6-1 7 2-2 3-6 3-7-2z" fill="#5a9a3a"/><path d="M2 6l5-4" stroke="#ddd"/></svg><span>GDAL/OGR [48 geoalgorithms]</span></div>
        <div class="trow"><span class="arr"></span><svg class="ti prov" viewBox="0 0 20 20"><path d="M10 1 8 9 3 5l3 9 4 5 4-5 3-9-5 4z" fill="#1f4a1f" stroke="#3d8a2d" stroke-width=".5"/></svg><span class="shift">GRASS GIS 7 commands [314 geoalgorithms]</span></div>
      </div>
      <div class="tbscroll"></div>
    </div>
    <div class="notice">You can add more algorithms to the toolbox, <a>enable<br>additional providers.</a> <a class="nclose">[close]</a></div>
  </section>
</main>
</body>
</html>
```

FILE: styles.css
```css
* { box-sizing: border-box; }
html, body { margin: 0; height: 997px; overflow: hidden; }
body {
  width: 1920px;
  background: #333;
  color: #aaa;
  font: 14px/18px "Liberation Sans", "Noto Sans CJK KR", sans-serif;
  letter-spacing: .3px;
  display: flex;
  flex-direction: column;
}
.defs { display: none; }
.k { letter-spacing: 1.65px; }
.l { letter-spacing: .8px; }
u { text-underline-offset: 1px; }
svg { display: block; flex: none; }

/* window chrome */
.titlebar { height: 29px; background: #fff; display: flex; align-items: center; padding-left: 3px; }
.titleicon { width: 22px; height: 26px; }
.apptitle { margin-left: 3px; font-size: 13.5px; color: #777; }
.wincontrols { margin-left: auto; display: flex; }
.wc { width: 12px; height: 12px; margin-left: 45px; }
.wc:last-child { margin-right: 26px; }

.menubar { height: 20px; display: flex; align-items: center; gap: 17.6px; padding-left: 8px; color: #999; }

.toolrow { display: flex; align-items: center; padding-left: 12px; }
.toolrow.first { height: 37px; padding-bottom: 2px; }
.toolrow.second { height: 38px; }
.t { width: 37px; height: 30px; display: flex; align-items: center; justify-content: center; flex: none; }
.t.hl svg { outline: 1px solid #2b6cc4; background: #666; }
.ic { width: 24px; height: 24px; }
.ic.wide { width: 30px; }
.ic.small { width: 20px; height: 20px; }
.sep6 { width: 6px; } .sep13 { width: 13px; } .sep15 { width: 15px; } .sep16 { width: 16px; }
.dd { flex: none; display: inline-block; width: 13px; height: 5px; position: relative; }
.dd::after { content: ""; position: absolute; left: 3px; top: 0; border: 4px solid transparent; border-top: 5px solid #ccc; border-bottom: 0; }
.dd.tight { margin-left: -6px; margin-right: -1px; }

/* workspace */
.workspace { height: 869px; display: grid; grid-template-columns: 54px 471px 972px 423px; }

.sidebar { padding-top: 11px; display: flex; flex-direction: column; }
.sb { height: 33px; display: flex; align-items: center; padding-left: 8px; flex: none; }
.sb .ic { width: 24px; height: 24px; }
.dd.side { margin-left: 6px; }

.leftpanels { display: flex; flex-direction: column; padding-right: 6px; }
.ptitle { display: grid; grid-template-columns: 1fr auto 1fr; align-items: center; color: #8e8e8e; }
.x { width: 18px; height: 18px; justify-self: end; }
.browser-title { height: 24px; padding-bottom: 2px; }
.ptools { display: flex; align-items: center; padding-left: 1px; }
.browser-tools { height: 28px; padding-bottom: 5px; }
.pt { width: 29px; height: 24px; display: flex; align-items: center; justify-content: center; flex: none; }
.pt.wdd { position: relative; }
.pt.wdd .dd { position: absolute; left: 28px; top: 9px; }
.layers-tools .pt:nth-child(6) { margin-left: 13px; }

.tree { background: #222; border: 1px solid #2d2d2d; border-radius: 3px; }
.browsertree { height: 445px; display: grid; grid-template-columns: 1fr 9px; grid-template-rows: 1fr 9px; }
.treeview { overflow: hidden; color: #c4c4c4; min-width: 0; }
.frow { height: 22px; display: flex; align-items: center; padding-left: 105px; white-space: nowrap; }
.fgray { height: 22px; flex: 1; display: flex; align-items: center; background: #555; margin-left: -5px; padding-left: 5px; min-width: 0; overflow: hidden; }
.fsel { background: #0f6b00; margin-left: 1px; padding-left: 104px; }
.fi { width: 19px; height: 14px; color: #ddd; margin-right: 6px; }
.fi.zip { height: 22px; }
.fi.blue { color: #a9c9ec; }
.fi.nomargin { margin-right: 8px; }
.fn { display: block; }
.arr { flex: none; width: 16px; height: 10px; margin-left: -16px; position: relative; }
.frow .arr { margin-left: -20px; margin-right: 4px; }
.arr::after { content: ""; position: absolute; left: 3px; top: 0; border: 5px solid transparent; border-left: 6px solid #eee; border-right: 0; }
.arr.down::after { border: 5px solid transparent; border-top: 6px solid #eee; border-bottom: 0; top: 2px; left: 1px; }
.vscroll { background: #2a2a2a; grid-row: 1; grid-column: 2; padding-top: 225px; }
.vthumb { display: block; height: 64px; background: #4a4a4a; border: 1px solid #222; }
.hscroll { background: #2a2a2a; grid-row: 2; grid-column: 1; padding-left: 1px; }
.hthumb { display: block; width: 300px; height: 8px; background: #555; border: 1px solid #222; }
.corner { background: #2a2a2a; }

.layers-title { height: 24px; margin-top: 4px; }
.layers-tools { height: 26px; margin: 1px 0 3px; }
.layertree { height: 314px; padding-top: 1px; }
.lrow { height: 28px; display: flex; align-items: center; padding-left: 27px; color: #eee; position: relative; }
.lrow::after { content: ""; position: absolute; left: 20px; right: 2px; bottom: 0; height: 1px; background: #333; }
.lsel { background: #0f6b00; margin-left: 1px; margin-right: 2px; padding-left: 26px; color: #fff; }
.eye { width: 17px; height: 12px; }
.sw { width: 18px; height: 18px; margin-left: 5px; border: 1px solid #161616; }
.sw-khaki { background: #989a6e; } .sw-blue { background: #3259bf; } .sw-sky { background: #7ec8f6; }
.sw-olive { background: #6f8a1f; } .sw-pink { background: #f05cbd; } .sw-red { background: #bf344b; }
.ln { margin-left: 6px; font-weight: 500; font-size: 15.5px; letter-spacing: 1.7px; }
.ln .l { letter-spacing: 1.5px; }

/* map */
.canvas { position: relative; overflow: hidden; background: #fff; border-top: 1px solid #888; border-left: 1px solid #888; }
.map { position: absolute; left: -1px; top: -1px; width: 972px; height: 869px; }

/* dialog */
.dialog {
  position: absolute; left: 34px; top: 131px; width: 843px; height: 661px;
  background: #333; box-shadow: 0 2px 22px rgba(0,0,0,.55); display: flex; flex-direction: column;
}
.dtitle { height: 37px; background: #fff; display: flex; align-items: center; padding: 0 0 1px 9px; color: #111; flex: none; }
.dicon { width: 20px; height: 24px; }
.dname { margin-left: 6px; letter-spacing: 1.9px; }
.dhelp { margin-left: auto; font-size: 14px; }
.dclose { width: 14px; height: 14px; margin: 0 24px 0 46px; }
.dbody { padding: 13px 14px 0 14px; display: flex; flex-direction: column; }
.dcols { display: flex; gap: 6px; height: 510px; }
.dleft { width: 553px; display: flex; flex-direction: column; }
.tabs { height: 42px; display: flex; align-items: flex-start; flex: none; }
.tab { border: 1px solid #444; text-align: center; color: #aaa; }
.tab.on { width: 86px; height: 36px; line-height: 34px; border-bottom: 0; }
.tab.off { width: 52px; height: 36px; line-height: 38px; margin-top: 5px; }
.batch { margin: 12px 3px 0 auto; width: 170px; height: 23px; line-height: 21px; border: 1px solid #222; background: #3a3a3a; padding-left: 5px; white-space: nowrap; }
.pane { flex: 1; min-height: 0; border: 1px solid #444; overflow: hidden; display: flex; }
.form { width: 519px; margin-left: 12px; flex: none; }
.formscroll { width: 6px; margin: 67px 0 0 12px; background: #444; border-left: 1px solid #222; }
.lab { height: 18px; line-height: 18px; white-space: nowrap; }
.attr { letter-spacing: 0; }
.stat { letter-spacing: .5px; }
.clipped { margin-top: -6px; }
.r2 { margin-top: 2px; } .r5 { margin-top: 5px; } .r6 { margin-top: 6px; } .r7 { margin-top: 7px; } .r8 { margin-top: 8px; }
.line { display: flex; align-items: center; gap: 3px; }
.grow { flex: 1; min-width: 0; }
.combo {
  display: flex; align-items: center; justify-content: space-between; padding: 1px 5px 0 4px;
  border: 1px solid #222; background: linear-gradient(#5a5a5a, #474747); color: #aaa; white-space: nowrap;
}
.combo .dd { width: 10px; }
.combo .dd::after { left: 0; }
.h29 { height: 29px; } .h24 { height: 24px; } .h23 { height: 23px; } .h20 { height: 20px; } .h25 { height: 25px; }
.dots { height: 29px; background: #444; border: 1px solid #222; display: flex; align-items: flex-end; justify-content: center; padding-bottom: 3px; letter-spacing: 1.500px; color: #888; flex: none; }
.dots.short { height: 25px; padding-bottom: 1px; }
.w39 { width: 39px; } .w34 { width: 34px; }
.dots.w34 { align-items: center; padding-bottom: 0; }
.refresh { width: 14px; height: 14px; }
.checks { display: grid; grid-template-columns: 264px 1fr; grid-auto-rows: 23px; margin-top: 1px; }
.chk { display: flex; align-items: center; gap: 7px; }
.chk.dim { color: #4e4e4e; }
.chk.single { height: 16px; }
.box { width: 16px; height: 16px; background: #555; flex: none; display: block; }
.box.on { background: #0f6b00; }
.spin { height: 19px; display: flex; align-items: center; justify-content: space-between; padding: 0 5px 0 2px; border: 1px solid #222; background: #545454; color: #aaa; }
.updown { display: flex; flex-direction: column; gap: 2px; }
.updown i { display: block; border: 4px solid transparent; }
.updown .up { border-bottom: 5px solid #ccc; border-top: 0; }
.updown .down { border-top: 5px solid #ccc; border-bottom: 0; }
.input { background: #888; border: 1px solid #161616; color: #111; padding: 2px 0 0 4px; display: flex; align-items: center; }
.input.ph { color: #555; padding-left: 5px; }
.help { width: 256px; background: #222; border: 1px solid #888; padding: 5px 3px; color: #585858; white-space: nowrap; overflow: hidden; }
.help h1 { margin: 0 0 13px; font-size: 23px; line-height: 26px; font-weight: 400; }
.help p { margin: 0 0 12px; font-size: 14px; line-height: 17px; }
.progress { margin: 32px 0 0 0; height: 26px; border: 2px solid #888; text-align: center; line-height: 22px; color: #999; }
.dbuttons { display: flex; justify-content: flex-end; gap: 9px; margin-top: 8px; }
.btn { height: 23px; line-height: 21px; border: 1px solid #222; background: #3a3a3a; text-align: center; }
.run { width: 35px; } .closeb { width: 43px; }

/* right side */
.rightpanels { padding-left: 8px; display: flex; flex-direction: column; min-width: 0; }
.rtitle { height: 24px; padding: 0 3px 2px 0; }
.layercombo { margin: 1px 3px 0 0; flex: none; }
.comboitem { display: flex; align-items: center; }
.stylebody { display: flex; margin: 9px 3px 0 0; height: 511px; }
.styletabs { width: 38px; background: #444; border-radius: 0 0 4px 4px; display: flex; flex-direction: column; flex: none; }
.stab { height: 40px; display: flex; align-items: center; justify-content: center; flex: none; }
.stab.active { background: #eee; }
.stic { width: 30px; height: 30px; }
.stylemain { margin-left: 3px; width: 371px; }
.rend { width: 14px; height: 14px; margin: 0 7px 0 5px; }
.dimtext { color: #999; letter-spacing: .5px; }
.symarea { display: flex; margin-top: 7px; }
.symleft { width: 363px; flex: none; }
.symscroll { width: 7px; height: 159px; background: #444; border: 1px solid #222; }
.symtop { display: flex; height: 99px; }
.symtree { width: 255px; background: #222; border: 1px solid #2d2d2d; border-radius: 3px; padding: 1px; color: #ddd; }
.symrow { height: 18px; display: flex; align-items: center; padding-left: 27px; }
.symrow .arr { margin-left: -24px; margin-right: 8px; }
.symrow.on { background: #0f6b00; color: #fff; }
.symrow b { font-weight: 400; font-size: 15px; margin-left: 6px; }
.symrow.sub { padding-left: 44px; }
.symrow.sub span:last-child { margin-left: 7px; }
.sw2 { width: 15px; height: 15px; border: 1px solid #16274f; display: block; flex: none; }
.sw2.blue { background: #3259bf; }
.sw2.indigo { background: #4b54b8; }
.preview { width: 60px; height: 60px; margin: 20px 0 0 28px; background: #4b54b8; border: 1px solid #0a0a1a; }
.symbtns { display: flex; gap: 6px; margin-top: 8px; }
.sbtn { width: 36px; height: 28px; border: 1px solid #222; display: flex; align-items: center; justify-content: center; background: #3a3a3a; }
.sic { width: 18px; height: 18px; }
.rule { height: 1px; background: #444; margin-top: 8px; }
.prop { display: flex; align-items: center; }
.plabel { width: 69px; flex: none; white-space: nowrap; }
.plabel .l { letter-spacing: 0; }
.fill { flex: 1; min-width: 0; }
.unit { margin-top: 9px; }
.opac { margin-top: 2px; height: 18px; }
.color { margin-top: 2px; }
.slider { height: 9px; background: #555; border: 1px solid #3a3a3a; position: relative; }
.knob { position: absolute; left: 0; top: -2px; width: 19px; height: 11px; border-radius: 2px; background: linear-gradient(#aaa, #777); }
.colorbtn { height: 21px; border: 1px solid #222; background: #444; display: flex; align-items: center; padding: 0 6px 0 15px; gap: 9px; }
.colorbar { height: 14px; flex: 1; background: #4b54b8; border-radius: 2px; }
.colorbtn .dd { width: 10px; }
.colorbtn .dd::after { left: 0; }
.rendhead { display: flex; align-items: center; height: 18px; margin-top: 33px; color: #fff; }
.tri { width: 0; height: 0; border: 3px solid transparent; border-top: 4px solid #555; border-bottom: 0; margin: 0 13px 0 5px; }
.rendhead b { font-weight: 700; white-space: nowrap; }
.hr { flex: 1; height: 2px; background: #eee; margin-left: 9px; }
.rprop { display: flex; align-items: center; }
.p1 { margin-top: 11px; height: 17px; }
.p2 { margin-top: 10px; }
.p3 { margin-top: 7px; }
.p4 { margin-top: 7px; height: 16px; }
.p5 { margin-top: 7px; height: 31px; }
.p6 { margin-top: 18px; height: 30px; }
.rlabel { width: 142px; flex: none; white-space: nowrap; }
.rs { width: 166px; flex: none; margin-left: 1px; }
.sv { width: 50px; height: 17px; margin-left: 8px; }
.blend { width: 89px; height: 25px; }
.txt { margin-left: 7px; }
.sqbtn { margin-left: auto; margin-right: 3px; width: 35px; border: 1px solid #222; display: flex; align-items: center; justify-content: center; color: #ddd; font-size: 10px; }
.star { height: 16px; }
.az { height: 31px; }
.azic { width: 19px; height: 19px; }
.ubtn { width: 35px; height: 30px; border: 1px solid #222; background: #444; margin-right: 6px; display: flex; align-items: center; justify-content: center; }
.uic { width: 18px; height: 18px; }
.live { margin-left: 142px; }
.livetxt { margin-left: 7px; white-space: nowrap; letter-spacing: 0; }
.apply { margin-left: 7px; width: 42px; height: 22px; line-height: 20px; border: 1px solid #222; text-align: center; letter-spacing: 1px; white-space: nowrap; }

.ttitle { height: 24px; margin-top: 7px; padding-right: 3px; }
.search { height: 20px; margin-left: -2px; background: #888; border: 1px solid #161616; color: #555; padding-left: 3px; line-height: 18px; }
.tbtree { height: 196px; margin: 2px 3px 0 -2px; background: #222; border: 1px solid #2d2d2d; display: flex; color: #ccc; }
.tblist { flex: 1; margin-top: -3px; min-width: 0; }
.trow { height: 22px; display: flex; align-items: center; padding-left: 23px; white-space: nowrap; }
.trow .arr { margin-left: -18px; margin-right: 2px; }
.trow.in { padding-left: 42px; }
.trow.on { background: #0f6b00; color: #ddd; margin-left: 1px; padding-left: 41px; }
.ti { width: 20px; height: 20px; margin-right: 7px; }
.ti.prov { margin-right: 6px; }
.trow .shift { margin-left: -2px; }
.tbscroll { width: 7px; height: 133px; margin: 2px 1px 0 0; background: #555; flex: none; }
.notice { height: 45px; margin: 1px 0 0 -3px; background: #55a8ff; border: 1px solid #9fd0ff; color: #fff; padding: 7px 0 0 5px; line-height: 17px; letter-spacing: .5px; }
.notice a { color: #00e; text-decoration: underline; }
.nclose { margin-left: 18px; }
```
